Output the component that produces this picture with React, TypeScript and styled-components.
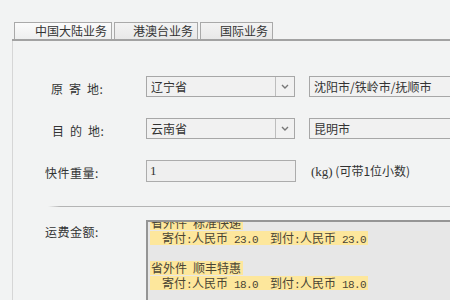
import styled, { createGlobalStyle } from 'styled-components';

const GlobalStyle = createGlobalStyle`
  html, body {
    margin: 0;
    padding: 0;
    background: #f2f3f3;
  }
  body {
    font-family: "Noto Sans CJK SC", "Noto Sans", sans-serif;
    font-size: 12px;
    color: #333;
  }
`;

const Page = styled.div`
  width: 450px;
  height: 300px;
  overflow: hidden;
  background: #f2f3f3;
`;

const TabBar = styled.div`
  display: flex;
  gap: 2px;
  padding: 22px 0 0 2px;
  margin-left: 12px;
  border-bottom: 2px solid #a2a2a2;
`;

const Tab = styled.div<{ active?: boolean; left: number }>`
  height: 16px;
  line-height: 16px;
  padding: 0 4px 0 ${(p) => p.left}px;
  border: 1px solid #a9a9a9;
  border-bottom: none;
  background: ${(p) => (p.active ? 'linear-gradient(#fbfbfb, #eeefef)' : 'linear-gradient(#f3f3f3, #e8e8e8)')};
  color: #333;
  white-space: nowrap;
`;

const Panel = styled.div`
  margin-left: 12px;
  border-left: 1px solid #d6d6d6;
  padding-top: 35px;
  height: 300px;
`;

const Row = styled.div<{ gap?: number }>`
  display: flex;
  align-items: center;
  margin-bottom: ${(p) => p.gap ?? 21}px;
`;

const Label = styled.div<{ indent: number }>`
  width: ${(p) => 133 - p.indent}px;
  padding-left: ${(p) => p.indent}px;
  padding-top: 3px;
  letter-spacing: 0.5px;
  flex-shrink: 0;
  color: #333;
  white-space: nowrap;
`;

const Spread = styled.span`
  letter-spacing: 6px;
`;

const Select = styled.div`
  width: 147px;
  height: 19px;
  display: flex;
  border: 1px solid #a7a7a7;
  background: #f1f1f1;
  flex-shrink: 0;
`;

const SelectText = styled.div`
  flex: 1;
  padding-left: 4px;
  line-height: 19px;
`;

const SelectButton = styled.div`
  width: 18px;
  border-left: 1px solid #bdbdbd;
  display: flex;
  align-items: center;
  justify-content: center;
`;

const TextBox = styled.div`
  width: 170px;
  height: 19px;
  line-height: 19px;
  margin-left: 14px;
  padding-left: 4px;
  border: 1px solid #a7a7a7;
  background: #f1f1f1;
  flex-shrink: 0;
  white-space: nowrap;
`;

const WeightBox = styled.div`
  width: 145px;
  height: 20px;
  line-height: 20px;
  padding-left: 3px;
  border: 1px solid #acacac;
  background: #efefef;
  font-family: "Liberation Serif", serif;
  font-size: 13px;
  flex-shrink: 0;
`;

const Hint = styled.div`
  margin-left: 15px;
  white-space: pre;
`;

const Unit = styled.span`
  font-family: "Liberation Serif", serif;
  font-size: 13px;
`;

const Separator = styled.div`
  height: 1px;
  margin: 24px 0 13px 35px;
  background: linear-gradient(to right, #f2f3f3, #b4b4b4 12px, #b4b4b4);
`;

const ResultRow = styled.div`
  display: flex;
  align-items: flex-start;
`;

const ResultBox = styled.div`
  flex: 1;
  height: 100px;
  overflow: hidden;
  border-top: 2px solid #959595;
  border-left: 2px solid #959595;
  background: #e7e7e7;
`;

const ResultList = styled.div`
  margin-top: -6px;
  padding-left: 2px;
  color: #4a4535;
`;

const Line = styled.div`
  height: 15px;
`;

const Mark = styled.span<{ indent?: boolean }>`
  display: inline-block;
  height: 14px;
  line-height: 14px;
  padding: 0 2px 0 ${(p) => (p.indent ? 12 : 1)}px;
  background: #fde79c;
  white-space: pre;
  vertical-align: top;
`;

// half-width characters, 6px each like the original bitmap font
const Half = styled.span`
  font-family: "Liberation Mono", monospace;
  font-size: 11px;
  letter-spacing: -0.6px;
  line-height: 14px;
`;

function Chevron() {
  return (
    <svg width="8" height="5" viewBox="0 0 8 5">
      <path d="M1 1 L4 4 L7 1" fill="none" stroke="#777" strokeWidth="1.4" />
    </svg>
  );
}

const results = [
  { kind: '省外件', name: '标准快递', send: '23.0', pay: '23.0' },
  { kind: '省外件', name: '顺丰特惠', send: '18.0', pay: '18.0' },
];

export default function App() {
  return (
    <Page>
      <GlobalStyle />
      <TabBar>
        <Tab active left={20}>中国大陆业务</Tab>
        <Tab left={18}>港澳台业务</Tab>
        <Tab left={19}>国际业务</Tab>
      </TabBar>
      <Panel>
        <Row>
          <Label indent={38}>
            <Spread>原寄</Spread>地:
          </Label>
          <Select>
            <SelectText>辽宁省</SelectText>
            <SelectButton>
              <Chevron />
            </SelectButton>
          </Select>
          <TextBox>沈阳市/铁岭市/抚顺市</TextBox>
        </Row>
        <Row>
          <Label indent={39}>
            <Spread>目的</Spread>地:
          </Label>
          <Select>
            <SelectText>云南省</SelectText>
            <SelectButton>
              <Chevron />
            </SelectButton>
          </Select>
          <TextBox>昆明市</TextBox>
        </Row>
        <Row gap={0}>
          <Label indent={32}>快件重量:</Label>
          <WeightBox>1</WeightBox>
          <Hint>
            <Unit>(kg)</Unit> (可带1位小数)
          </Hint>
        </Row>
        <Separator />
        <ResultRow>
          <Label indent={32}>运费金额:</Label>
          <ResultBox>
            <ResultList>
              {results.map((r) => (
                <div key={r.name}>
                  <Line>
                    <Mark>
                      {r.kind}
                      <Half> </Half>
                      {r.name}
                    </Mark>
                  </Line>
                  <Line>
                    <Mark indent>
                      寄付<Half>:</Half>人民币<Half>{` ${r.send}  `}</Half>到付<Half>:</Half>人民币
                      <Half>{` ${r.pay}`}</Half>
                    </Mark>
                  </Line>
                  <Line />
                </div>
              ))}
            </ResultList>
          </ResultBox>
        </ResultRow>
      </Panel>
    </Page>
  );
}
